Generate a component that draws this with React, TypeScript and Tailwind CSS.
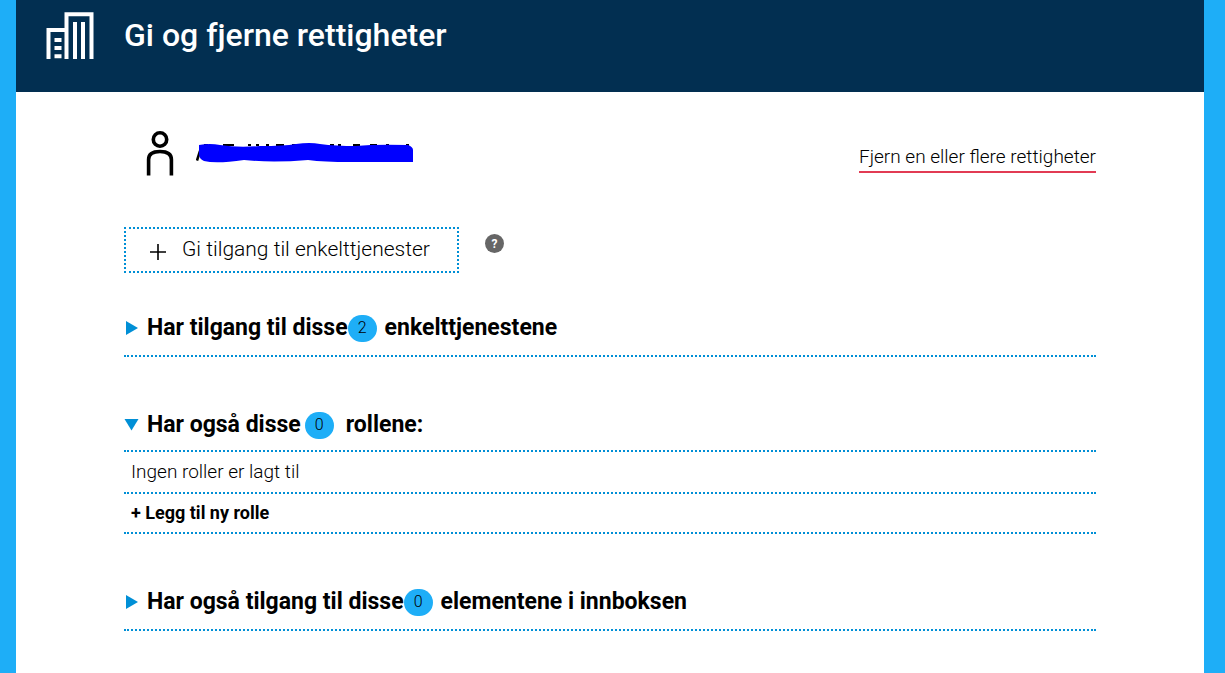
import type { ReactNode } from "react";

function BuildingIcon() {
  return (
    <svg width="48" height="47" viewBox="0 0 48 47" fill="none" stroke="#fff" strokeWidth="4" className="shrink-0" aria-hidden="true">
      <path d="M2.5 47V18H18.500M20.500 47V2.200H45.500V47M29 47V10M37 47V10" />
      <path d="M8.500 28H15.500M8.500 36H15.500M8.500 44.200H15.500" />
    </svg>
  );
}

function PersonIcon() {
  return (
    <svg width="28" height="46" viewBox="0 0 28 46" fill="none" stroke="#000" strokeWidth="3.600" className="shrink-0" aria-hidden="true">
      <circle cx="14" cy="9.500" r="6.700" />
      <path d="M2.600 45.500V29.500C2.600 24 7 21.500 14 21.500S25.400 24 25.400 29.500V45.500" />
    </svg>
  );
}

function RedactedName() {
  return (
    <svg width="218" height="22" viewBox="0 0 218 22" role="img" aria-label="Skjult navn">
      <path d="M1 18.500L4 9" stroke="#000" strokeWidth="2.500" />
      <path d="M8 3H12M27 3H38M52 3H55M60 3H63M70 3H73M80 3H88M96 3H104M134 3H138M142 3H145M157 3H164M174 3H181M190 3H193M210 3H213" stroke="#000" strokeWidth="2" />
      <path d="M3 3Q14 1 24 3Q42 6 64 4Q88 4 100 2Q114 0 124 2Q140 4 160 4Q180 2 212 3Q217 5 217 8V20H154Q128 20 112 18Q76 21 48 18Q20 22 8 19Q3 17 3 12Z" fill="#00f" />
    </svg>
  );
}

function Count({ children }: { children: ReactNode }) {
  return (
    <span className="inline-flex h-[27px] w-[29px] items-center justify-center rounded-full bg-[#1eaef7] text-base font-light">
      {children}
    </span>
  );
}

type SectionProps = { open?: boolean; before: string; count: number; after: string };

function SectionHeading({ open = false, before, count, after }: SectionProps) {
  return (
    <h2 className="border-b-2 border-dotted border-[#008fd6]">
      <button
        type="button"
        aria-expanded={open}
        className={`flex w-full items-center text-left text-[23px] font-bold ${open ? "h-[50px]" : "h-[54px]"}`}
      >
        <svg width="15" height="14" viewBox="0 0 15 14" fill="#008fd6" className="mr-2 shrink-0" aria-hidden="true">
          {open ? <path d="M0.500 1H14.500L7.500 12.500Z" /> : <path d="M2 0V14L14 7Z" />}
        </svg>
        <span className={open ? "mr-1" : ""}>{before}</span>
        <Count>{count}</Count>
        <span className={open ? "ml-3" : "ml-2"}>{after}</span>
      </button>
    </h2>
  );
}

export default function App() {
  return (
    <div className="min-h-screen bg-[#1eaef7] pr-[21px] pl-4 font-['Roboto','Liberation_Sans',sans-serif] text-black">
      <div className="min-h-screen bg-white">
        <header className="flex h-[92px] items-start bg-[#022f51] pt-3 pl-[30px] text-white">
          <BuildingIcon />
          <h1 className="ml-[30px] text-[32px] leading-[47px] font-medium">Gi og fjerne rettigheter</h1>
        </header>
        <main className="px-[108px] pb-10">
          <div className="flex items-center justify-between pt-[38px]">
            <div className="flex items-center gap-[22px] pl-[22px]">
              <PersonIcon />
              <RedactedName />
            </div>
            <a href="#fjern" className="mt-2.5 border-b-2 border-[#e23b53] text-[19px] leading-7 font-light">
              Fjern en eller flere rettigheter
            </a>
          </div>
          <div className="mt-[51px] flex items-start gap-[26px]">
            <button type="button" className="flex h-[46px] w-[335px] items-center gap-4 border-2 border-dotted border-[#008fd6] pl-6 text-[21px] font-light">
              <svg width="16" height="16" viewBox="0 0 16 16" stroke="#000" strokeWidth="1.600" className="mt-1" aria-hidden="true">
                <path d="M0 8H16M8 0V16" />
              </svg>
              Gi tilgang til enkelttjenester
            </button>
            <button type="button" aria-label="Hjelp" className="mt-[7px] flex h-[19px] w-[19px] items-center justify-center rounded-full bg-[#666] text-xs font-bold text-white">
              ?
            </button>
          </div>
          <section className="mt-7">
            <SectionHeading before="Har tilgang til disse" count={2} after="enkelttjenestene" />
          </section>
          <section className="mt-[43px]">
            <SectionHeading open before="Har også disse" count={0} after="rollene:" />
            <p className="border-b-2 border-dotted border-[#008fd6] pl-[7px] text-[19px] leading-10 font-light">Ingen roller er lagt til</p>
            <div className="border-b-2 border-dotted border-[#008fd6] pl-[7px]">
              <button type="button" className="block h-[38px] text-lg font-bold">+ Legg til ny rolle</button>
            </div>
          </section>
          <section className="mt-[41px]">
            <SectionHeading before="Har også tilgang til disse" count={0} after="elementene i innboksen" />
          </section>
        </main>
      </div>
    </div>
  );
}
